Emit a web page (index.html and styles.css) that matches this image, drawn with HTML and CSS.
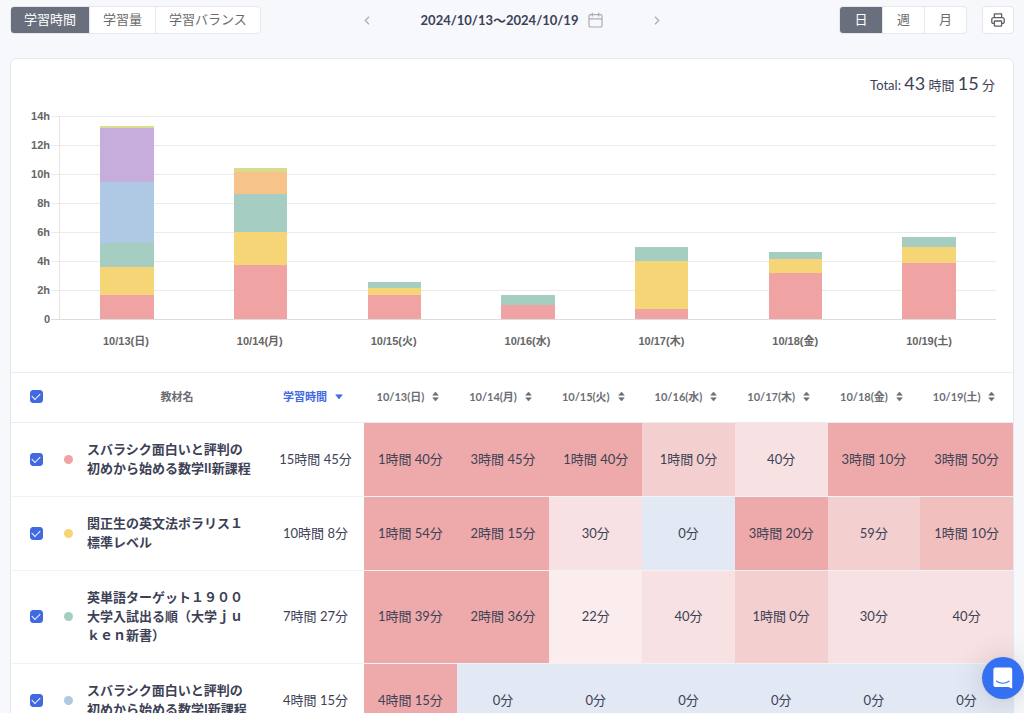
FILE: index.html
```html
<!DOCTYPE html>
<html lang="ja">
<head>
<meta charset="utf-8">
<meta name="viewport" content="width=device-width, initial-scale=1">
<title>学習時間</title>
<link rel="stylesheet" href="styles.css">
</head>
<body>
<svg class="defs" aria-hidden="true">
  <symbol id="sort" viewBox="0 0 8 12"><path d="M4 .8 7.2 4.6H.8zM4 11.2 7.2 7.4H.8z" fill="currentColor" stroke="currentColor" stroke-width=".6" stroke-linejoin="round"/></symbol>
</svg>

<header class="toolbar">
  <div class="segment">
    <button type="button" class="segment-item active">学習時間</button>
    <button type="button" class="segment-item">学習量</button>
    <button type="button" class="segment-item">学習バランス</button>
  </div>
  <div class="period">
    <button type="button" class="icon-button" aria-label="前の週"><svg width="6" height="9" viewBox="0 0 6 9"><path d="M5 .8 1.2 4.5 5 8.2"/></svg></button>
    <button type="button" class="period-label">2024/10/13〜2024/10/19
      <svg width="15" height="16" viewBox="0 0 15 16"><rect x="1" y="2.6" width="13" height="12.4" rx="1.6"/><path d="M1 6.8h13M4.3.8v3.6M10.7.8v3.6"/></svg>
    </button>
    <button type="button" class="icon-button" aria-label="次の週"><svg width="6" height="9" viewBox="0 0 6 9"><path d="M1 .8 4.8 4.5 1 8.2"/></svg></button>
  </div>
  <div class="actions">
    <div class="segment">
      <button type="button" class="segment-item active">日</button>
      <button type="button" class="segment-item">週</button>
      <button type="button" class="segment-item">月</button>
    </div>
    <button type="button" class="print" aria-label="印刷"><svg width="14" height="14" viewBox="0 0 14 14"><path d="M3.4 4.6V.9h7.2v3.7M3.4 10.4H2.2A1.4 1.4 0 0 1 .8 9V6.2a1.5 1.5 0 0 1 1.5-1.5h9.4a1.5 1.5 0 0 1 1.5 1.5V9a1.4 1.4 0 0 1-1.4 1.4h-1.2"/><rect x="3.4" y="8" width="7.2" height="5.2" rx=".6"/></svg></button>
  </div>
</header>

<main class="card">
  <p class="total">Total: <span class="total-number">43</span> 時間 <span class="total-number">15</span> 分</p>

  <section class="chart" aria-label="日別の学習時間">
    <ul class="y-axis"><li>14h</li><li>12h</li><li>10h</li><li>8h</li><li>6h</li><li>4h</li><li>2h</li><li>0</li></ul>
    <div class="gridlines"><i></i><i></i><i></i><i></i><i></i><i></i><i></i></div>
    <div class="bars">
      <div class="bar">
        <i class="red" style="--h:1.67"></i><i class="yellow" style="--h:1.9"></i><i class="green" style="--h:1.65"></i><i class="blue" style="--h:4.25"></i><i class="purple" style="--h:3.73"></i><i class="lime" style="--h:.12"></i>
      </div>
      <div class="bar">
        <i class="red" style="--h:3.75"></i><i class="yellow" style="--h:2.25"></i><i class="green" style="--h:2.6"></i><i class="orange" style="--h:1.55"></i><i class="lime" style="--h:.27"></i>
      </div>
      <div class="bar">
        <i class="red" style="--h:1.67"></i><i class="yellow" style="--h:.5"></i><i class="green" style="--h:.37"></i>
      </div>
      <div class="bar">
        <i class="red" style="--h:1"></i><i class="green" style="--h:.67"></i>
      </div>
      <div class="bar">
        <i class="red" style="--h:.67"></i><i class="yellow" style="--h:3.33"></i><i class="green" style="--h:1"></i>
      </div>
      <div class="bar">
        <i class="red" style="--h:3.17"></i><i class="yellow" style="--h:.98"></i><i class="green" style="--h:.5"></i>
      </div>
      <div class="bar">
        <i class="red" style="--h:3.83"></i><i class="yellow" style="--h:1.17"></i><i class="green" style="--h:.67"></i>
      </div>
    </div>
    <ul class="x-axis"><li>10/13(日)</li><li>10/14(月)</li><li>10/15(火)</li><li>10/16(水)</li><li>10/17(木)</li><li>10/18(金)</li><li>10/19(土)</li></ul>
  </section>

  <table class="records">
    <colgroup><col class="col-check"><col class="col-dot"><col class="col-name"><col class="col-time"><col span="7"></colgroup>
    <thead>
      <tr>
        <th><input type="checkbox" class="check" aria-label="すべて選択" checked></th>
        <th></th>
        <th scope="col">教材名</th>
        <th scope="col"><button type="button" class="sort sorted">学習時間<svg width="8" height="6" viewBox="0 0 8 6"><path d="M4 5 7.3.8H.7z" fill="currentColor" stroke="currentColor" stroke-width=".6" stroke-linejoin="round"/></svg></button></th>
        <th scope="col"><button type="button" class="sort">10/13(日)<svg width="7" height="11"><use href="#sort"/></svg></button></th>
        <th scope="col"><button type="button" class="sort">10/14(月)<svg width="7" height="11"><use href="#sort"/></svg></button></th>
        <th scope="col"><button type="button" class="sort">10/15(火)<svg width="7" height="11"><use href="#sort"/></svg></button></th>
        <th scope="col"><button type="button" class="sort">10/16(水)<svg width="7" height="11"><use href="#sort"/></svg></button></th>
        <th scope="col"><button type="button" class="sort">10/17(木)<svg width="7" height="11"><use href="#sort"/></svg></button></th>
        <th scope="col"><button type="button" class="sort">10/18(金)<svg width="7" height="11"><use href="#sort"/></svg></button></th>
        <th scope="col"><button type="button" class="sort">10/19(土)<svg width="7" height="11"><use href="#sort"/></svg></button></th>
      </tr>
    </thead>
    <tbody>
      <tr>
        <td><input type="checkbox" class="check" id="m1" checked></td>
        <td class="dot-cell"><span class="dot red"></span></td>
        <td class="name"><label for="m1">スバラシク面白いと評判の初めから始める数学II新課程</label></td>
        <td>15時間 45分</td>
        <td class="l5">1時間 40分</td><td class="l5">3時間 45分</td><td class="l5">1時間 40分</td><td class="l3">1時間 0分</td><td class="l2">40分</td><td class="l5">3時間 10分</td><td class="l5">3時間 50分</td>
      </tr>
      <tr>
        <td><input type="checkbox" class="check" id="m2" checked></td>
        <td class="dot-cell"><span class="dot yellow"></span></td>
        <td class="name"><label for="m2">関正生の英文法ポラリス１標準レベル</label></td>
        <td>10時間 8分</td>
        <td class="l5">1時間 54分</td><td class="l5">2時間 15分</td><td class="l2">30分</td><td class="l0">0分</td><td class="l5">3時間 20分</td><td class="l3">59分</td><td class="l4">1時間 10分</td>
      </tr>
      <tr>
        <td><input type="checkbox" class="check" id="m3" checked></td>
        <td class="dot-cell"><span class="dot green"></span></td>
        <td class="name"><label for="m3">英単語ターゲット１９００大学入試出る順（大学ｊｕｋｅｎ新書）</label></td>
        <td>7時間 27分</td>
        <td class="l5">1時間 39分</td><td class="l5">2時間 36分</td><td class="l1">22分</td><td class="l2">40分</td><td class="l3">1時間 0分</td><td class="l2">30分</td><td class="l2">40分</td>
      </tr>
      <tr>
        <td><input type="checkbox" class="check" id="m4" checked></td>
        <td class="dot-cell"><span class="dot blue"></span></td>
        <td class="name"><label for="m4">スバラシク面白いと評判の初めから始める数学I新課程</label></td>
        <td>4時間 15分</td>
        <td class="l5">4時間 15分</td><td class="l0">0分</td><td class="l0">0分</td><td class="l0">0分</td><td class="l0">0分</td><td class="l0">0分</td><td class="l0">0分</td>
      </tr>
    </tbody>
  </table>
</main>

<button type="button" class="chat" aria-label="チャットを開く"><svg width="20" height="22" viewBox="0 0 20 22"><path d="M2.4.5h14.8a2 2 0 0 1 2 2V21.6l-4-1.6H2.4a2 2 0 0 1-2-2V2.5a2 2 0 0 1 2-2z" fill="#fff"/><path d="M3.6 14.2c3.6 2.7 8.8 2.7 12.4 0" fill="none" stroke="#3370f2" stroke-width="1.2" stroke-linecap="round"/></svg></button>
</body>
</html>
```

FILE: styles.css
```css
* {
  box-sizing: border-box;
}

body {
  margin: 0;
  height: 100vh;
  overflow: hidden;
  padding: 6px 10px 0;
  background: #f6f8fc;
  color: #3d4155;
  font: 13px/19px Lato, "Noto Sans CJK JP", sans-serif;
}

button {
  margin: 0;
  padding: 0;
  border: 0;
  background: none;
  color: inherit;
  font: inherit;
  cursor: pointer;
}

ul {
  margin: 0;
  padding: 0;
  list-style: none;
}

svg {
  flex: none;
  display: block;
}

.defs {
  position: absolute;
  width: 0;
  height: 0;
}

/* Toolbar */
.toolbar {
  display: grid;
  grid-template-columns: 1fr auto 1fr;
  align-items: center;
  margin-bottom: 24px;
}

.segment {
  display: flex;
  justify-self: start;
  height: 28px;
  border: 1px solid #e4e7ee;
  border-radius: 4px;
  background: #fff;
  overflow: hidden;
}

.segment-item {
  min-width: 42px;
  padding: 0 13px 2px;
  color: #6a6a6a;
}

.segment-item + .segment-item {
  border-left: 1px solid #e4e7ee;
}

.segment-item.active {
  background: #696f7d;
  color: #fff;
}

.period {
  display: flex;
  align-items: center;
  gap: 46px;
}

.icon-button {
  display: flex;
  justify-content: center;
  width: 16px;
}

.period svg {
  fill: none;
  stroke: #aaacb0;
  stroke-width: 1.2;
}

.period-label {
  display: flex;
  align-items: center;
  gap: 10px;
  font-weight: 700;
}

.actions {
  display: flex;
  justify-self: end;
  gap: 15px;
}

.print {
  display: flex;
  align-items: center;
  justify-content: center;
  width: 32px;
  height: 28px;
  border: 1px solid #e4e7ee;
  border-radius: 4px;
  background: #fff;
}

.print svg {
  fill: none;
  stroke: #5c5f66;
  stroke-width: 1.3;
}

/* Card */
.card {
  border: 1px solid #e4e7ec;
  border-radius: 6px;
  background: #fff;
  overflow: hidden;
}

.total {
  margin: 0;
  height: 43px;
  padding: 14px 18px 0;
  line-height: 20px;
  text-align: right;
}

.total-number {
  font-size: 18px;
}

/* Chart */
.chart {
  display: grid;
  grid-template-columns: 39px 9px 1fr;
  grid-template-rows: 14px 204px 52px;
  padding-right: 17px;
  color: #666;
  font: bold 11px/16px "Liberation Sans", "Noto Sans CJK JP", sans-serif;
}

.y-axis {
  grid-area: 1 / 1 / 4 / 2;
  text-align: right;
}

.y-axis li {
  height: 29px;
  line-height: 29px;
}

.gridlines {
  grid-area: 2 / 2 / 3 / 4;
  display: flex;
  flex-direction: column;
  margin-left: 1px;
  border-bottom: 1px solid #dcdcdc;
}

.gridlines i {
  flex: 1;
  border-top: 1px solid #ebebeb;
}

.bars {
  grid-area: 2 / 3 / 3 / 4;
  display: flex;
  border-left: 1px solid #e4e4e4;
  padding-bottom: 1px;
}

.bar {
  flex: 1;
  display: flex;
  flex-direction: column-reverse;
  align-items: center;
}

.bar i {
  width: 40%;
  height: calc(var(--h) * 100% / 14);
}

.x-axis {
  grid-area: 3 / 3 / 4 / 4;
  display: flex;
  padding-top: 13px;
}

.x-axis li {
  flex: 1;
  text-align: center;
}

.red { background: #f0a3a3; }
.yellow { background: #f5d576; }
.green { background: #a5cdc1; }
.blue { background: #afc8e3; }
.purple { background: #c6addb; }
.orange { background: #f6c48b; }
.lime { background: #d9dd8b; }

/* Records */
.records {
  width: 100%;
  table-layout: fixed;
  border-collapse: separate;
  border-spacing: 0;
  border-top: 1px solid #eaecf0;
}

.col-check { width: 50px; }
.col-dot { width: 26px; }
.col-name { width: 180px; }
.col-time { width: 97px; }

.records th {
  height: 50px;
  padding: 0 0 2px;
  border-bottom: 1px solid #eaecf0;
  color: #6b6e75;
  font-size: 11px;
  font-weight: 700;
}

.sort {
  display: inline-flex;
  align-items: center;
  gap: 8px;
  padding-right: 5px;
  font-weight: 700;
}

.sort.sorted {
  color: #4169e1;
}

.records td {
  padding: 17px 0 18px;
  border-bottom: 1px solid rgba(232, 233, 236, .6);
  background-clip: padding-box;
  text-align: center;
}

.records .name {
  padding-right: 14px;
  font-weight: 700;
  text-align: left;
}

.name label {
  display: block;
}

.records .dot-cell {
  padding-left: 3px;
  text-align: left;
}

.dot {
  display: inline-block;
  width: 9px;
  height: 9px;
  border-radius: 50%;
}

.records .l0 { background-color: #e2e9f4; }
.records .l1 { background-color: #fbeded; }
.records .l2 { background-color: #f7e1e2; }
.records .l3 { background-color: #f4cfcf; }
.records .l4 { background-color: #f1bfbd; }
.records .l5 { background-color: #eeaaaa; }

.check {
  appearance: none;
  display: grid;
  place-items: center;
  width: 13px;
  height: 13px;
  margin: 0 auto;
  border: 1px solid #4169e1;
  border-radius: 3px;
  background: #fff;
}

.check:checked {
  background: #4169e1;
}

.check:checked::after {
  content: "";
  width: 7px;
  height: 4px;
  margin-bottom: 2px;
  border: solid #fff;
  border-width: 0 0 1px 1px;
  transform: rotate(-45deg);
}

.chat {
  position: fixed;
  right: 0;
  bottom: 14px;
  display: grid;
  place-items: center;
  width: 42px;
  height: 42px;
  border-radius: 50%;
  background: #3370f2;
  box-shadow: 0 1px 6px rgba(0, 0, 0, .06), 0 2px 32px rgba(0, 0, 0, .16);
}
```
